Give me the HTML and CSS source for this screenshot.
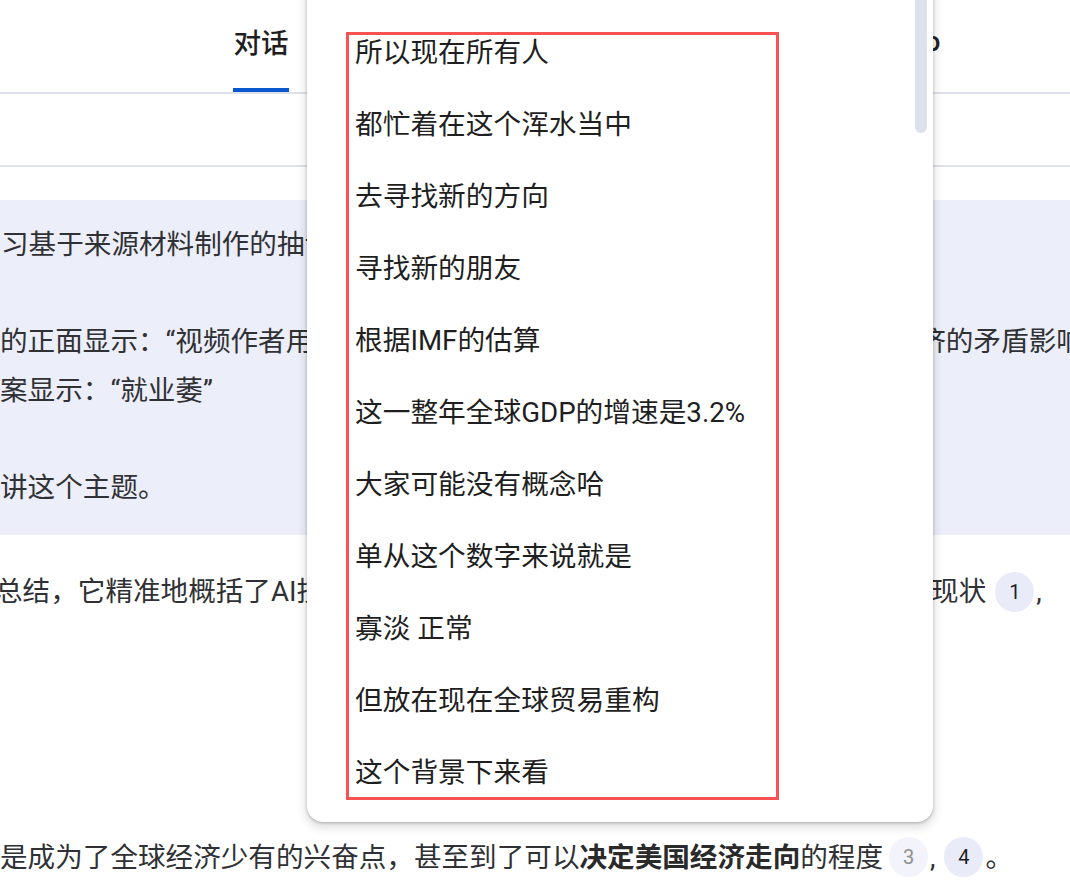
FILE: index.html
```html
<!DOCTYPE html>
<html lang="zh-CN">
<head>
<meta charset="utf-8">
<title>对话</title>
<link rel="stylesheet" href="styles.css">
</head>
<body>
<div class="app">
  <header class="tabs">
    <div class="tab active">对话</div>
    <div class="tab">Studio</div>
  </header>
  <div class="toolbar"></div>
  <main class="chat">
    <section class="user-msg">
      <div class="line first">习基于来源材料制作的抽认卡，请解释其中一张卡片。</div>
      <div class="line"></div>
      <div class="line">的正面显示：“视频作者用一个生动的比喻来解释AI技术给全球就业和整体经济的矛盾影响”</div>
      <div class="line">案显示：“就业萎”</div>
      <div class="line"></div>
      <div class="line">讲这个主题。</div>
    </section>
    <section class="answer">
      <div class="line">总结，它精准地概括了AI技术对全球经济的矛盾影响，以及劳动力市场当中的现状<span class="cite">1</span>,</div>
      <div class="line last">是成为了全球经济少有的兴奋点，甚至到了可以<b>决定美国经济走向</b>的程度<span class="cite faded">3</span>,<span class="cite">4</span>。</div>
    </section>
  </main>

  <div class="popup">
    <div class="popup-body">
      <div class="highlight">
        <p>所以现在所有人</p>
        <p>都忙着在这个浑水当中</p>
        <p>去寻找新的方向</p>
        <p>寻找新的朋友</p>
        <p>根据IMF的估算</p>
        <p>这一整年全球GDP的增速是3.2%</p>
        <p>大家可能没有概念哈</p>
        <p>单从这个数字来说就是</p>
        <p>寡淡 正常</p>
        <p>但放在现在全球贸易重构</p>
        <p>这个背景下来看</p>
      </div>
    </div>
    <div class="track"><div class="thumb"></div></div>
  </div>
</div>
</body>
</html>
```

FILE: styles.css
```css
* { box-sizing: border-box; }

html, body {
  margin: 0;
  padding: 0;
  background: #ffffff;
}

body {
  font-family: Roboto, "Noto Sans CJK SC", sans-serif;
  color: #303134;
  width: 1070px;
  height: 886px;
  overflow: hidden;
}

.app {
  position: relative;
  width: 1070px;
  height: 886px;
  overflow: hidden;
}

/* header tabs */
.tabs {
  display: flex;
  align-items: flex-end;
  height: 94px;
  border-bottom: 2px solid #dfe2ea;
  padding-left: 233px;
}

.tab {
  height: 92px;
  display: flex;
  align-items: center;
  justify-content: center;
  font-size: 27.6px;
  font-weight: 500;
  color: #1f1f1f;
  border-bottom: 4px solid transparent;
  padding-bottom: 6px;
  width: 56px;
}

.tab.active {
  border-bottom-color: #0b57d0;
}

.tab + .tab {
  width: auto;
  margin-left: 572px;
}

.toolbar {
  height: 73px;
  border-bottom: 2px solid #dfe2ea;
}

/* chat */
.chat {
  padding-top: 33px;
  font-size: 27.6px;
  line-height: 48.5px;
}

.line {
  white-space: nowrap;
  height: 48.5px;
}

.user-msg {
  background: #eceef9;
  height: 335px;
  padding: 21px 0 23px 0;
}

.user-msg .first {
  margin-left: 1px;
}

.answer {
  padding-top: 33px;
  margin-left: -5px;
}

.answer .last {
  margin-top: 217px;
  margin-left: 5px;
}

.answer b {
  font-weight: 700;
  color: #2a2a2a;
}

.cite {
  display: inline-flex;
  align-items: center;
  justify-content: center;
  width: 39px;
  height: 40px;
  border-radius: 50%;
  background: #e9ebf8;
  color: #1f1f1f;
  font-size: 20px;
  line-height: 1;
  vertical-align: middle;
  margin: -4px 2px 0 9px;
}

.cite.faded {
  background: #f3f4fb;
  color: #8f8f8f;
  margin-left: 6px;
}

/* popup overlay */
.popup {
  position: absolute;
  left: 307px;
  top: -28px;
  width: 626px;
  height: 850px;
  background: #ffffff;
  border-radius: 16px;
  box-shadow: 0 1px 3px rgba(0, 0, 0, 0.25), 0 4px 10px 2px rgba(0, 0, 0, 0.12);
  display: flex;
  font-family: Roboto, "Noto Sans CJK SC", sans-serif;
}

.popup-body {
  flex: 1;
  padding: 60px 0 0 39px;
}

.highlight {
  width: 433px;
  border: 3px solid #fa5252;
  padding: 0 6px 6px 6px;
  display: flex;
  flex-direction: column;
  gap: 36px;
}

.highlight p {
  margin: 0;
  font-size: 27.7px;
  line-height: 36px;
  color: #1f1f1f;
  white-space: nowrap;
}

.track {
  width: 12px;
  margin-right: 6px;
}

.thumb {
  margin-top: 10px;
  height: 151px;
  border-radius: 6px;
  background: #dde1ec;
}
```
